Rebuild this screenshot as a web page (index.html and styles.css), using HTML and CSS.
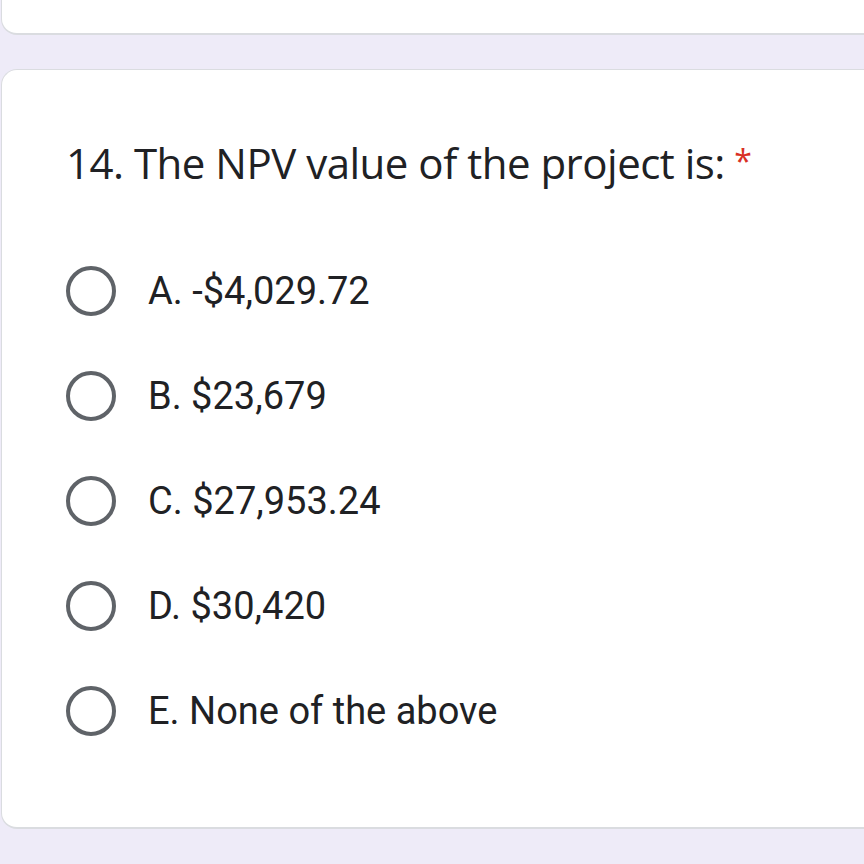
FILE: index.html
```html
<!DOCTYPE html>
<html>
<head>
<meta charset="utf-8">
<link rel="stylesheet" href="styles.css">
</head>
<body>
<div class="card card-prev"></div>
<div class="card card-question">
  <div class="title">14. The NPV value of the project is: <span class="req">*</span></div>
  <div class="options">
    <div class="option"><span class="radio"></span><span class="label">A. -$4,029.72</span></div>
    <div class="option"><span class="radio"></span><span class="label">B. $23,679</span></div>
    <div class="option"><span class="radio"></span><span class="label">C. $27,953.24</span></div>
    <div class="option"><span class="radio"></span><span class="label">D. $30,420</span></div>
    <div class="option"><span class="radio"></span><span class="label">E. None of the above</span></div>
  </div>
</div>
</body>
</html>
```
FILE: styles.css
```css
html, body {
  margin: 0;
  padding: 0;
  background: #eeebf8;
  height: 864px;
  overflow: hidden;
}
body {
  font-family: Roboto, "Noto Sans", sans-serif;
  color: #202124;
}
.card {
  background: #fff;
  margin-left: 1px;
  border: 1px solid #dadce0;
  border-right: none;
  border-bottom: 2px solid #dadce0;
  box-sizing: border-box;
}
.card-prev {
  height: 35px;
  border-top: none;
  border-radius: 0 0 0 16px;
}
.card-question {
  margin-top: 34px;
  height: 760px;
  border-radius: 16px 0 0 16px;
  padding-left: 64px;
}
.title {
  font-family: "Open Sans", "Noto Sans", sans-serif;
  font-size: 42px;
  line-height: 48px;
  padding-top: 69px;
  letter-spacing: -0.5px;
}
.req {
  color: #d93025;
  font-size: 32px;
  vertical-align: top;
  margin-left: -1px;
  position: relative;
  top: -2px;
}
.options {
  display: flex;
  flex-direction: column;
  padding-top: 51px;
}
.option {
  display: flex;
  align-items: center;
  height: 105px;
}
.radio {
  width: 42px;
  height: 42px;
  border: 4.5px solid #5f6368;
  border-radius: 50%;
  flex-shrink: 0;
}
.label {
  font-size: 38px;
  margin-left: 32px;
}
```
